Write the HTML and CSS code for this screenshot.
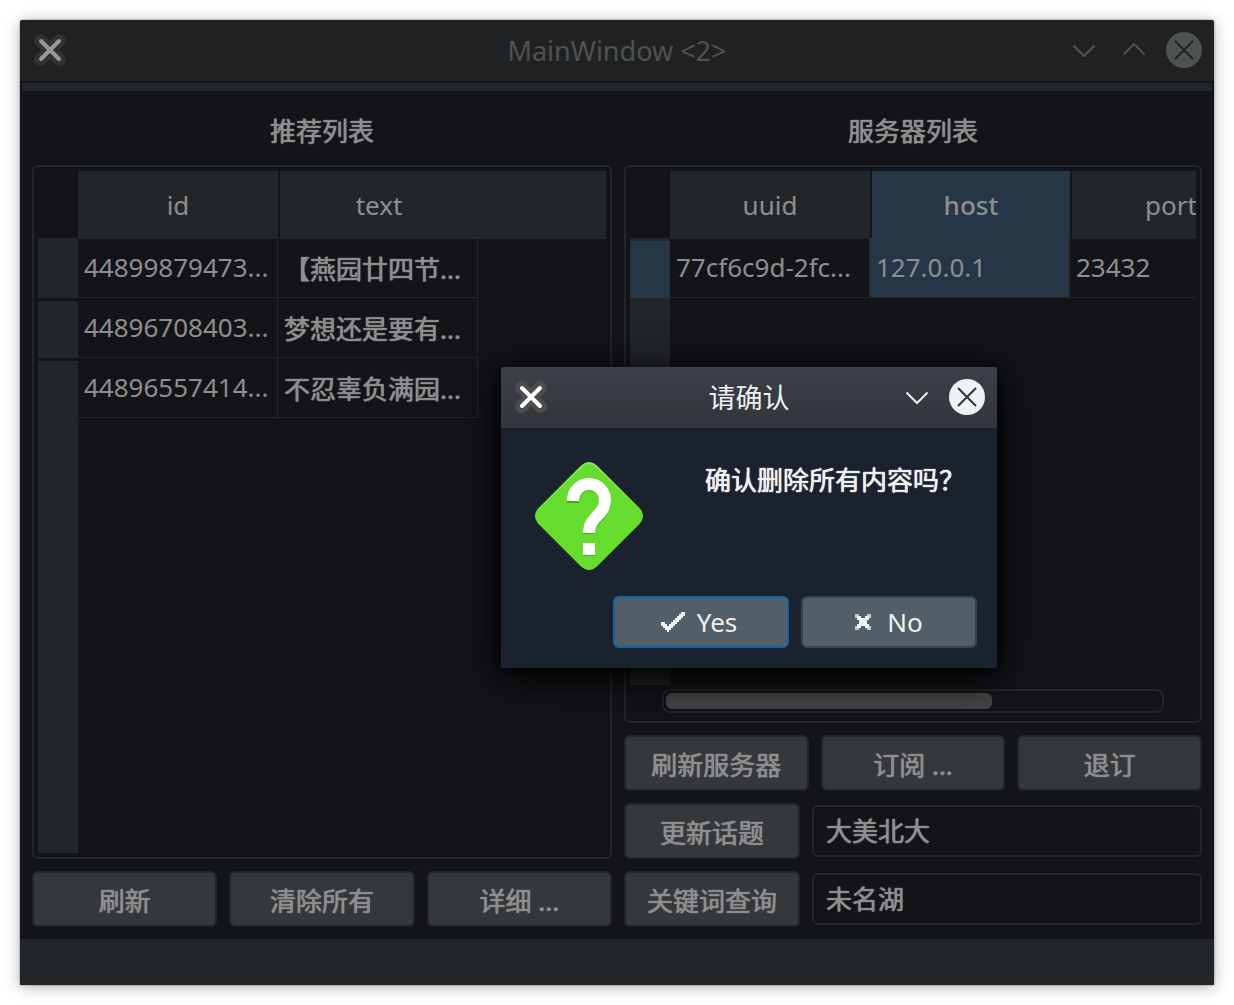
FILE: index.html
```html
<!DOCTYPE html>
<html lang="zh-CN">
<head>
<meta charset="utf-8">
<meta name="viewport" content="width=device-width, initial-scale=1">
<title>MainWindow</title>
<link rel="stylesheet" href="styles.css">
</head>
<body>
<svg class="defs" aria-hidden="true">
  <symbol id="app-icon" viewBox="0 0 36 36">
    <path class="app-halo" d="M8.500 8.500l19 19M27.500 8.500l-19 19"/>
    <path class="app-cross" d="M9 9l18 18M27 9L9 27"/>
  </symbol>
  <symbol id="chevron-down" viewBox="0 0 36 36"><path class="line" d="M7.500 13.500L18 24l10.500-10.500"/></symbol>
  <symbol id="chevron-up" viewBox="0 0 36 36"><path class="line" d="M7.500 22.500L18 12l10.500 10.500"/></symbol>
  <symbol id="close" viewBox="0 0 36 36">
    <circle cx="18" cy="18" r="18" fill="currentColor"/>
    <path class="close-cross" d="M9 9l18 18M27 9L9 27"/>
  </symbol>
</svg>
<div class="window">
  <header class="titlebar">
    <svg class="icon"><use href="#app-icon"/></svg>
    <h1 class="title">MainWindow &lt;2&gt;</h1>
    <div class="controls">
      <button class="control" aria-label="Minimize"><svg class="icon"><use href="#chevron-down"/></svg></button>
      <button class="control" aria-label="Maximize"><svg class="icon"><use href="#chevron-up"/></svg></button>
      <button class="control" aria-label="Close"><svg class="icon"><use href="#close"/></svg></button>
    </div>
  </header>
  <div class="toolbar"></div>
  <main class="content">
    <section class="column">
      <h2 class="heading medium">推荐列表</h2>
      <div class="frame">
        <div class="viewport">
          <table class="grid">
            <colgroup><col class="col-index"><col class="col-data"><col class="col-data"><col></colgroup>
            <thead>
              <tr><td class="corner"></td><th scope="col">id</th><th scope="col">text</th><td class="head-rest"></td></tr>
            </thead>
            <tbody>
              <tr><th scope="row"></th><td>44899879473...</td><td class="medium">【燕园廿四节...</td><td class="rest"></td></tr>
              <tr><th scope="row"></th><td>44896708403...</td><td class="medium">梦想还是要有...</td><td class="rest"></td></tr>
              <tr><th scope="row"></th><td>44896557414...</td><td class="medium">不忍辜负满园...</td><td class="rest"></td></tr>
              <tr class="filler"><td class="index-rest"></td><td class="rest" colspan="3"></td></tr>
            </tbody>
          </table>
        </div>
      </div>
      <div class="button-row">
        <button class="button medium">刷新</button>
        <button class="button medium">清除所有</button>
        <button class="button medium">详细 ...</button>
      </div>
    </section>
    <section class="column">
      <h2 class="heading medium">服务器列表</h2>
      <div class="frame">
        <div class="viewport">
          <table class="grid grid-wide">
            <colgroup><col class="col-index"><col class="col-data"><col class="col-data"><col class="col-data"></colgroup>
            <thead>
              <tr><td class="corner"></td><th scope="col">uuid</th><th scope="col" class="current">host</th><th scope="col">port</th></tr>
            </thead>
            <tbody>
              <tr><th scope="row" class="current"></th><td>77cf6c9d-2fc...</td><td class="current">127.0.0.1</td><td>23432</td></tr>
              <tr class="filler"><td class="index-rest"></td><td class="rest" colspan="3"></td></tr>
            </tbody>
          </table>
        </div>
        <div class="scrollbar"><div class="thumb"></div></div>
      </div>
      <div class="button-row">
        <button class="button medium">刷新服务器</button>
        <button class="button medium">订阅 ...</button>
        <button class="button medium">退订</button>
      </div>
      <div class="field-row">
        <button class="button medium" id="topic">更新话题</button>
        <input class="field medium" type="text" value="大美北大" aria-labelledby="topic">
      </div>
      <div class="field-row">
        <button class="button medium" id="keyword">关键词查询</button>
        <input class="field medium" type="text" value="未名湖" aria-labelledby="keyword">
      </div>
    </section>
  </main>
  <footer class="statusbar"></footer>

  <div class="dialog" role="dialog" aria-labelledby="dialog-title">
    <header class="titlebar">
      <svg class="icon"><use href="#app-icon"/></svg>
      <h2 class="title" id="dialog-title">请确认</h2>
      <div class="controls">
        <button class="control" aria-label="Minimize"><svg class="icon"><use href="#chevron-down"/></svg></button>
        <button class="control" aria-label="Close"><svg class="icon"><use href="#close"/></svg></button>
      </div>
    </header>
    <div class="message">
      <svg class="question" viewBox="0 0 108 108" aria-hidden="true">
        <defs>
          <linearGradient id="edge" x1="0" y1="0" x2="0" y2="1"><stop offset="0" stop-color="#84e657"/><stop offset=".5" stop-color="#66dc2e"/></linearGradient>
        </defs>
        <path fill="#66dc2e" stroke="url(#edge)" stroke-width="2" d="M47 4q7-6 14 0l43 43q6 7 0 14l-43 43q-7 6-14 0L4 61q-6-7 0-14z"/>
        <g fill="none" stroke="#45a71d" stroke-width="12"><path d="M38 41v-2a16 16 0 0 1 32 0c0 16-16 16-16 33"/><path d="M54 82v12"/></g>
        <g fill="none" stroke="#fff" stroke-width="12"><path d="M38 39v-1a16 16 0 0 1 32 0c0 16-16 16-16 33"/><path d="M54 81v12"/></g>
      </svg>
      <p class="prompt medium">确认删除所有内容吗？</p>
    </div>
    <div class="actions">
      <button class="button primary"><svg class="glyph" viewBox="0 0 12 12" shape-rendering="crispEdges"><path d="M10 1h2v2h-1v1h-1v1H9v1H8v1H7v1H6v1H5v1H4v1H3v-1H2V9H1V8H0V6h2v1h1v1h1V7h1V6h1V5h1V4h1V3h1V2h1z" fill="currentColor"/></svg>Yes</button>
      <button class="button"><svg class="glyph" viewBox="0 0 12 12" shape-rendering="crispEdges"><path d="M2 2h2v2H2zM8 2h2v2H8zM2 8h2v2H2zM8 8h2v2H8z" fill="#c3c9cd"/><path d="M3 3h2v1h2V3h2v2H8v2h1v2H7V8H5v1H3V7h1V5H3z" fill="currentColor"/></svg>No</button>
    </div>
  </div>
</div>
</body>
</html>
```

FILE: styles.css
```css
* { box-sizing: border-box; }

body {
  margin: 0;
  padding: 20px;
  background: #fff;
  color: #8e8e8e;
  font: 400 26px/36px "Noto Sans", "Noto Sans CJK SC", sans-serif;
}

h1, h2, p { margin: 0; font: inherit; }
button, input { font: inherit; color: inherit; margin: 0; }
svg { display: block; }
.defs { position: absolute; width: 0; height: 0; }

/* Slightly heavier strokes for Chinese labels */
.medium { text-shadow: 0 0 1px currentColor, 0 0 1px currentColor; }

.window {
  --halo: #323232;
  --cross: #999;
  --close-cross: #202122;
  position: relative;
  display: flex;
  flex-direction: column;
  min-height: calc(100vh - 40px);
  background: #131418;
  border-radius: 3px 3px 0 0;
  box-shadow: 0 0 2px rgba(0, 0, 0, .5), 0 2px 16px rgba(0, 0, 0, .3);
}

/* Title bars */
.titlebar {
  display: grid;
  grid-template-columns: 1fr auto 1fr;
  align-items: center;
  height: 61px;
  padding: 0 12px 1px;
  background: #202122;
  color: #4f5253;
  border-radius: 3px 3px 0 0;
}
.title { font-size: 27px; padding-top: 2px; }
.icon { width: 36px; height: 36px; }
.controls { display: flex; justify-content: flex-end; gap: 14px; }
.control { padding: 0; border: 0; background: none; }
.app-halo { fill: none; stroke: var(--halo); stroke-width: 13px; stroke-linecap: round; }
.app-cross { fill: none; stroke: var(--cross); stroke-width: 4px; stroke-linecap: round; }
.line { fill: none; stroke: currentColor; stroke-width: 2px; }
.close-cross { fill: none; stroke: var(--close-cross); stroke-width: 2px; }

.toolbar { height: 8px; margin: 2px 2px 0; background: #232629; }
.statusbar { height: 46px; background: #232629; }

/* Two columns of lists */
.content {
  flex: 1;
  display: grid;
  grid-template-columns: 290fr 289fr;
  gap: 12px;
  padding: 12px;
}
.column { display: flex; flex-direction: column; gap: 12px; min-width: 0; }
.heading { text-align: center; line-height: 56px; margin-bottom: -6px; }

.frame {
  flex: 1;
  display: flex;
  flex-direction: column;
  padding: 4px;
  border: 2px solid #232629;
  border-radius: 6px;
}
.viewport { flex: 1; display: grid; overflow: hidden; }

.grid {
  width: 100%;
  height: 100%;
  table-layout: fixed;
  border-collapse: separate;
  border-spacing: 0;
}
.grid-wide { width: 640px; }
.col-index { width: 40px; }
.col-data { width: 200px; }

.grid th, .grid td { padding: 0 6px; font-weight: inherit; white-space: nowrap; }
.grid thead th, .grid thead td { height: 67px; box-shadow: 0 1px #232629; background: #232629; }
.grid thead .corner { background: none; box-shadow: none; }
.grid thead th + th { border-left: 2px solid #131418; }
.grid thead .current { background: #253746; box-shadow: 0 1px #253746; font-weight: 500; }

.grid tbody th { height: 60px; background: #232629; }
.grid tbody tr + tr th { border-top: 3px solid #131418; }
.grid tbody td { padding-bottom: 1px; border: solid #232629; border-width: 0 1px 1px 0; }
.grid tbody td.medium { padding: 2px 6px 0; }
.grid tbody th.current { background: #253746; border-top: 3px solid #232629; }
.grid tbody td.current { background: #253746; }
.grid tbody td.rest { border: 0; }
.grid tbody td.index-rest { background: #232629; border: 0; }
.filler { height: 100%; }

.scrollbar {
  height: 24px;
  margin: 4px 32px;
  padding: 2px;
  border: 2px solid #232629;
  border-radius: 8px;
}
.thumb { width: 66%; height: 16px; border-radius: 6px; background: #464646; }

/* Buttons and fields */
.button-row { display: grid; grid-template-columns: repeat(3, 1fr); gap: 12px; }
.field-row { display: grid; grid-template-columns: 176px 1fr; gap: 12px; align-items: center; }
.button {
  height: 56px;
  padding: 4px 0 0;
  border: 2px solid #232629;
  border-radius: 6px;
  background: #35383b;
}
.field {
  width: 100%;
  height: 52px;
  padding: 0 12px 2px;
  border: 2px solid #232629;
  border-radius: 6px;
  background: #131418;
}

/* Confirmation dialog */
.dialog {
  --halo: #4d4d4d;
  --cross: #fff;
  --close-cross: #31363b;
  position: absolute;
  top: 347px;
  left: 481px;
  width: 496px;
  background: #1a232d;
  color: #f0f0f0;
  border-radius: 3px 3px 0 0;
  box-shadow: 0 8px 48px #000, 0 4px 16px rgba(0, 0, 0, .6);
}
.dialog .titlebar { background: linear-gradient(#3c4047, #31363b); color: #eff0f1; }
.message { display: flex; gap: 62px; padding: 34px 18px 26px 34px; }
.question { width: 108px; height: 108px; }
.prompt { white-space: nowrap; }
.actions { display: flex; justify-content: flex-end; gap: 12px; padding: 0 20px 20px; }
.dialog .button {
  display: flex;
  align-items: center;
  justify-content: center;
  gap: 12px;
  width: 176px;
  height: 52px;
  padding: 0 4px 0 0;
  border-color: #37434f;
  background: #525f69;
}
.dialog .primary { border-color: #1464a0; }
.glyph { width: 24px; height: 24px; }
```
